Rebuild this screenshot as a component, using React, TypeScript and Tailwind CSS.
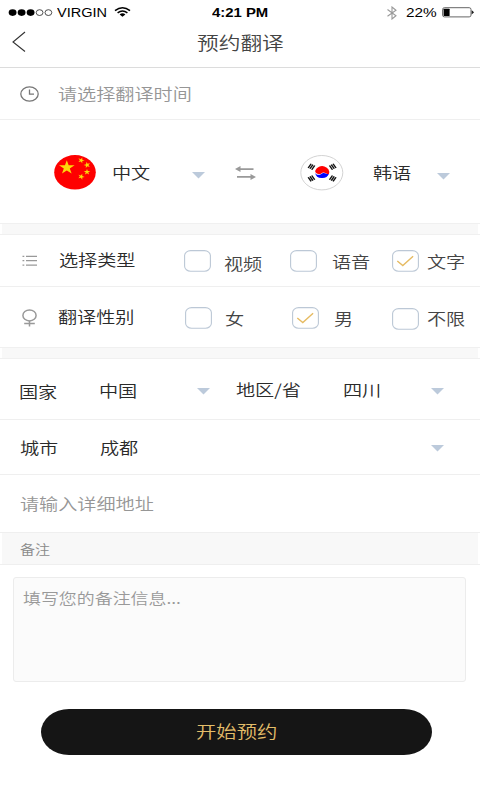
import type { ReactNode } from "react";

function T({
  children,
  className = "",
  size = "text-[16px]",
  stretch = "scale-x-[1.195]",
}: {
  children: ReactNode;
  className?: string;
  size?: string;
  stretch?: string;
}) {
  return (
    <span className={`block origin-left whitespace-nowrap ${stretch} ${size} leading-none ${className}`}>
      {children}
    </span>
  );
}

function Caret({ className = "" }: { className?: string }) {
  return (
    <svg className={`block h-[7px] w-[13px] ${className}`} viewBox="0 0 13 7">
      <path d="M0 0H13L6.5 6.5Z" fill="#bccadb" />
    </svg>
  );
}

function Box({ checked = false, className = "" }: { checked?: boolean; className?: string }) {
  return (
    <svg className={`block h-[22px] w-[27px] ${className}`} viewBox="0 0 27 22" fill="none">
      <rect x="0.6" y="0.6" width="25.8" height="20.6" rx="6" ry="5" stroke="#bcc8d6" strokeWidth="1.1" />
      {checked && <path d="M5.3 11L10.8 15.6L21.1 6.2" stroke="#e6bb62" strokeWidth="1.4" />}
    </svg>
  );
}

const STAR = "M0 -1L.2245 -.309L.951 -.309L.363 .118L.588 .809L0 .382L-.588 .809L-.363 .118L-.951 -.309L-.2245 -.309Z";

function ChinaFlag() {
  return (
    <svg className="mt-[35px] block h-[35px] w-[42px]" viewBox="0 0 42 35">
      <ellipse cx="21" cy="17.3" rx="20.8" ry="17.2" fill="#fe0000" />
      <g fill="#fbd90b">
        <path d={STAR} transform="translate(12.8 12.6) scale(8.2 7.4)" />
        <path d={STAR} transform="translate(27.2 5.3) rotate(20) scale(3.5 3.1)" />
        <path d={STAR} transform="translate(33.1 10) rotate(-15) scale(3.5 3.1)" />
        <path d={STAR} transform="translate(33 17) scale(3.5 3.1)" />
        <path d={STAR} transform="translate(27.2 21.7) rotate(20) scale(3.5 3.1)" />
      </g>
    </svg>
  );
}

function KoreaFlag() {
  return (
    <svg className="mt-[35px] block h-[36px] w-[44px]" viewBox="0 0 44 36">
      <ellipse cx="21.8" cy="17.7" rx="21" ry="17.2" fill="#fff" stroke="#d3d3d3" strokeWidth="1" />
      <g transform="translate(22.1 17.6) scale(1.19 1)">
        <path d="M-5.6 -2.4A5.9 5.9 0 0 1 5.7 1.4C3.5 2.5 2.5 -1 0 .3C-2.5 2.5 -5.3 1.5 -5.8 -1Z" fill="#f00" />
        <path d="M5.7 1.2A5.9 5.9 0 0 1 -5.8 .3C-4.5 3 -1.6 2.3 0 .8C2.5 -.8 3.5 2.3 5.7 1.2Z" fill="#00f" />
        <g stroke="#111" strokeWidth="1.25">
          <path d="M-11.7 -4.6L-9.2 -8.8M-10.2 -3.8L-7.7 -8M-8.7 -2.9L-6.2 -7.1" />
          <path d="M11.7 -4.6L9.2 -8.8M10.2 -3.8L7.7 -8M8.7 -2.9L6.2 -7.1" />
          <path d="M-11.7 4.6L-9.2 8.8M-10.2 3.8L-7.7 8M-8.7 2.9L-6.2 7.1" />
          <path d="M11.7 4.6L9.2 8.8M10.2 3.8L7.7 8M8.7 2.9L6.2 7.1" />
        </g>
      </g>
    </svg>
  );
}

function StatusBar() {
  return (
    <div className="grid h-[24px] grid-cols-[8px_49px_56px_99px_173px_21px_37px_1fr] items-start font-['Liberation_Sans',Arial,sans-serif] font-normal text-black">
      <span />
      <svg className="mt-[8px] block h-[9px] w-[46px]" viewBox="0 0 46 9">
        <g fill="#000">
          <ellipse cx="4.6" cy="4.6" rx="3.9" ry="3.3" />
          <ellipse cx="13.6" cy="4.6" rx="3.9" ry="3.3" />
          <ellipse cx="22.6" cy="4.6" rx="3.9" ry="3.3" />
        </g>
        <g fill="none" stroke="#222" strokeWidth=".8">
          <ellipse cx="31.6" cy="4.6" rx="3.4" ry="2.9" />
          <ellipse cx="40.4" cy="4.6" rx="3.4" ry="2.9" />
        </g>
      </svg>
      <T size="text-[12px]" stretch="scale-x-[1.21]" className="mt-[7px]">VIRGIN</T>
      <svg className="mt-[7px] ml-[1px] block h-[10px] w-[17px]" viewBox="0 0 17 10" fill="none" stroke="#000" strokeWidth="1.5">
        <path d="M1 3.7Q8.5 -2 16 3.7M3.6 5.9Q8.5 2.1 13.4 5.9" />
        <path d="M5.6 7.5Q8.5 5.2 11.4 7.5L8.5 9.7Z" fill="#000" stroke="none" />
      </svg>
      <T size="text-[12px]" stretch="scale-x-[1.24]" className="mt-[7px] font-bold">4:21 PM</T>
      <svg className="mt-[6px] ml-[2px] block h-[14px] w-[10px]" viewBox="0 0 10 14" fill="none" stroke="#999" strokeWidth="1.1">
        <path d="M.5 3.5L9 9.7L5 13V1L9 4.3L.5 10.3" />
      </svg>
      <T size="text-[12px]" stretch="scale-x-[1.28]" className="mt-[7px]">22%</T>
      <svg className="mt-[7px] -ml-px block h-[11px] w-[32px]" viewBox="0 0 32 11">
        <rect x=".6" y=".7" width="28.4" height="9.2" rx="1.8" fill="#fff" stroke="#555" strokeWidth=".9" />
        <rect x="1.6" y="1.7" width="6" height="7.3" rx=".6" fill="#000" />
        <path d="M29.6 3.2Q31.6 4.2 31.6 5.3Q31.6 6.4 29.6 7.4Z" fill="#222" />
      </svg>
    </div>
  );
}

function Band() {
  return (
    <div className="h-[12px] border-y border-[#f0f0f0] px-[2px]">
      <div className="h-full bg-[#f8f8f8]" />
    </div>
  );
}

export default function App() {
  return (
    <main className="flex h-[800px] w-[480px] flex-col overflow-hidden bg-white font-['Noto_Sans_CJK_SC',sans-serif] font-[350] text-[#2a2a2a]">
      <header className="h-[68px] border-b border-[#dcdcdc]">
        <StatusBar />
        <div className="grid grid-cols-[12px_185px_1fr] items-start">
          <span />
          <svg className="mt-[7px] block h-[22px] w-[15px]" viewBox="0 0 15 22" fill="none" stroke="#333" strokeWidth="1.1">
            <path d="M13 1L1 11L13 20.5" />
          </svg>
          <T size="text-[18px]" stretch="scale-x-[1.205]" className="mt-[9px] text-[#444]">预约翻译</T>
        </div>
      </header>

      <section className="grid h-[52px] grid-cols-[20px_38px_1fr] items-start border-b border-[#efefef]">
        <span />
        <svg className="mt-[18px] block h-[16px] w-[19px]" viewBox="0 0 19 16" fill="none" stroke="#777" strokeWidth="1.3">
          <ellipse cx="9.5" cy="8" rx="8.7" ry="7.2" />
          <path d="M9.5 3.6V8.2H14" />
        </svg>
        <T className="mt-[17px] text-[#969696]">请选择翻译时间</T>
      </section>

      <section className="grid h-[103px] grid-cols-[54px_58px_80px_43px_65px_73px_64px_1fr] items-start">
        <span />
        <ChinaFlag />
        <T className="mt-[44px]">中文</T>
        <Caret className="mt-[52px]" />
        <svg className="mt-[45px] block h-[16px] w-[22px]" viewBox="0 0 22 16" fill="#999">
          <path d="M0 4L5.5 1V3.2H18.5V4.9H5.5V7ZM21 12L15.5 9V11.1H2V12.8H15.5V15Z" />
        </svg>
        <KoreaFlag />
        <T className="mt-[44px]">韩语</T>
        <Caret className="mt-[53px]" />
      </section>
      <Band />

      <section className="grid h-[52px] grid-cols-[22px_37px_125px_40px_66px_42px_60px_35px_1fr] items-start border-b border-[#efefef]">
        <span />
        <svg className="mt-[20px] block h-[12px] w-[16px]" viewBox="0 0 16 12" stroke="#999" strokeWidth="1.3">
          <path d="M.5 1.3H2.3M.5 5.7H2.3M.5 10.2H2.3M4 1.3H15M4 5.7H15M4 10.2H15" />
        </svg>
        <T className="mt-[16px]">选择类型</T>
        <Box className="mt-[15px]" />
        <T className="mt-[20px] text-[#444]">视频</T>
        <Box className="mt-[15px]" />
        <T className="mt-[18px] text-[#444]">语音</T>
        <Box checked className="mt-[15px]" />
        <T className="mt-[18px] text-[#444]">文字</T>
      </section>
      <section className="grid h-[60px] grid-cols-[22px_36px_127px_40px_67px_42px_58px_35px_1fr] items-start">
        <span />
        <svg className="mt-[22px] block h-[18px] w-[16px]" viewBox="0 0 16 18" fill="none" stroke="#999" strokeWidth="1.5">
          <ellipse cx="7.5" cy="6.4" rx="6.6" ry="5.5" />
          <path d="M7.5 11.7V17.5M2.2 14.5H12.8" />
        </svg>
        <T className="mt-[21px]">翻译性别</T>
        <Box className="mt-[20px]" />
        <T className="mt-[23px] text-[#444]">女</T>
        <Box checked className="mt-[20px]" />
        <T className="mt-[23px] text-[#444]">男</T>
        <Box className="mt-[21px]" />
        <T className="mt-[23px] text-[#444]">不限</T>
      </section>
      <Band />

      <section className="grid h-[61px] grid-cols-[19px_80px_98px_39px_107px_88px_1fr] items-start border-b border-[#efefef]">
        <span />
        <T className="mt-[24px]">国家</T>
        <T className="mt-[23px]">中国</T>
        <Caret className="mt-[29px]" />
        <T className="mt-[22px]">地区/省</T>
        <T className="mt-[22px]">四川</T>
        <Caret className="mt-[29px]" />
      </section>
      <section className="grid h-[55px] grid-cols-[20px_80px_331px_1fr] items-start border-b border-[#efefef]">
        <span />
        <T className="mt-[19px]">城市</T>
        <T className="mt-[19px]">成都</T>
        <Caret className="mt-[25px]" />
      </section>
      <section className="h-[57px] pt-[20px] pl-[20px]">
        <T className="w-max text-[#969696]">请输入详细地址</T>
      </section>
      <section className="h-[33px] border-y border-[#efefef] px-[2px]">
        <div className="h-full bg-[#f8f8f8] pt-[10px] pl-[18px]">
          <T size="text-[12.6px]" className="w-max text-[#8a8a8a]">备注</T>
        </div>
      </section>

      <section className="mt-[12px] ml-[13px] h-[105px] w-[453px] rounded-[3px] border border-[#ececec] bg-[#fbfbfb] pt-[12px] pl-[9px]">
        <T size="text-[15px]" className="w-max text-[#999]">填写您的备注信息...</T>
      </section>

      <button className="mt-[27px] ml-[41px] flex h-[46px] w-[391px] items-start rounded-[28px/23px] bg-[#151515] pt-[13px] pl-[155px] text-[#e3bd69]">
        <T size="text-[17px]">开始预约</T>
      </button>
    </main>
  );
}
